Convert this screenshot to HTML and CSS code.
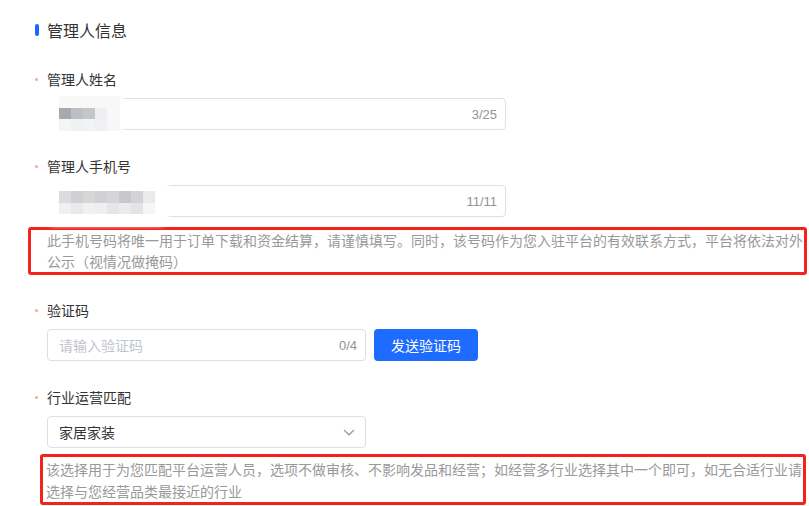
FILE: index.html
```html
<!DOCTYPE html>
<html lang="zh-CN">
<head>
<meta charset="utf-8">
<title>管理人信息</title>
<link rel="stylesheet" href="styles.css">
</head>
<body>
<div class="page">
  <div class="section-title"><span class="bar"></span>管理人信息</div>

  <div class="item item-name">
    <div class="label"><span class="dot"></span>管理人姓名</div>
    <div class="field field-wide">
      <span class="value"></span>
      <span class="count">3/25</span>
      <div class="mosaic mosaic-name">
        <div class="mrow m-name-1"></div>
        <div class="mrow m-name-2"></div>
        <div class="mrow m-name-3"></div>
      </div>
    </div>
  </div>

  <div class="item item-phone">
    <div class="label"><span class="dot"></span>管理人手机号</div>
    <div class="field field-wide">
      <span class="value"></span>
      <span class="count">11/11</span>
      <div class="mosaic mosaic-phone">
        <div class="mrow m-phone-1"></div>
        <div class="mrow m-phone-2"></div>
      </div>
    </div>
    <div class="hint hint-phone">此手机号码将唯一用于订单下载和资金结算，请谨慎填写。同时，该号码作为您入驻平台的有效联系方式，平台将依法对外<br>公示（视情况做掩码）</div>
  </div>

  <div class="item item-code">
    <div class="label"><span class="dot"></span>验证码</div>
    <div class="code-row">
      <div class="field field-narrow">
        <span class="placeholder">请输入验证码</span>
        <span class="count">0/4</span>
      </div>
      <button class="btn-send" type="button">发送验证码</button>
    </div>
  </div>

  <div class="item item-industry">
    <div class="label"><span class="dot"></span>行业运营匹配</div>
    <div class="field field-narrow select">
      <span class="selected">家居家装</span>
      <svg class="arrow" width="12" height="7" viewBox="0 0 12 7" aria-hidden="true"><path d="M1 1 L6 5.8 L11 1" fill="none" stroke="#999" stroke-width="1.2"/></svg>
    </div>
    <div class="hint hint-industry">该选择用于为您匹配平台运营人员，选项不做审核、不影响发品和经营；如经营多行业选择其中一个即可，如无合适行业请<br>选择与您经营品类最接近的行业</div>
  </div>
</div>
</body>
</html>
```

FILE: styles.css
```css
* { box-sizing: border-box; }

html, body {
  margin: 0;
  padding: 0;
  background: #fff;
}

body {
  font-family: "Noto Sans CJK SC", "Noto Sans", "Liberation Sans", sans-serif;
  font-size: 14px;
  color: #333;
  width: 809px;
  height: 506px;
  overflow: hidden;
}

.page {
  padding: 18px 0 0 47px;
}

.section-title {
  display: flex;
  align-items: center;
  margin-left: -12px;
  height: 24px;
  line-height: 24px;
  font-size: 16px;
  color: #333;
}

.bar {
  width: 4px;
  height: 12px;
  border-radius: 2px;
  background: #1a66ff;
  margin-right: 8px;
}

.item-name { margin-top: 26px; }
.item-phone { margin-top: 25px; }
.item-code { margin-top: 24px; }
.item-industry { margin-top: 25px; }

.label {
  display: flex;
  align-items: center;
  margin-left: -12px;
  height: 22px;
  line-height: 22px;
  font-size: 14px;
  color: #333;
}

.dot {
  width: 3px;
  height: 3px;
  border-radius: 50%;
  background: #f7a3a3;
  margin-right: 9px;
}

.field {
  position: relative;
  display: flex;
  align-items: center;
  justify-content: space-between;
  height: 32px;
  margin-top: 8px;
  padding: 0 8px 0 11px;
  border: 1px solid #dcdfe6;
  border-radius: 4px;
  background: #fff;
}

.field-wide { width: 459px; }
.field-narrow { width: 319px; }

.count {
  font-family: "Liberation Sans", "Noto Sans", sans-serif;
  font-size: 13px;
  color: #909399;
}

.placeholder {
  color: #c0c4cc;
  font-size: 14px;
}

.selected {
  color: #333;
  font-size: 14px;
}

.select { padding-right: 10px; }

.arrow { display: block; }

.code-row {
  display: flex;
  align-items: flex-start;
  gap: 8px;
}

.btn-send {
  margin-top: 8px;
  width: 104px;
  height: 32px;
  border: none;
  border-radius: 4px;
  background: #1e6bff;
  color: #fff;
  font-family: "Noto Sans CJK SC", "Noto Sans", sans-serif;
  font-size: 14px;
  padding: 0;
}

/* red annotation boxes */
.hint {
  border: 3px solid #f5211b;
  border-radius: 3px;
  color: #999;
  font-size: 14px;
  white-space: nowrap;
}

.hint-phone {
  margin-top: 10px;
  margin-left: -19px;
  width: 779px;
  padding: 0 0 0 16px;
  line-height: 21px;
}

.hint-industry {
  margin-top: 6px;
  margin-left: -7px;
  width: 766px;
  padding: 1px 0 0 3px;
  line-height: 22px;
}

/* pixelated privacy masks over the filled values */
.mosaic {
  position: absolute;
  background: #fff;
  box-shadow: 0 0 4px 3px #fff;
  border-radius: 8px;
}

.mosaic-name {
  left: -1px;
  top: -6px;
  width: 74px;
  height: 41px;
  padding: 3px 0 0 12px;
}

.mosaic-phone {
  left: -1px;
  top: -8px;
  width: 119px;
  height: 45px;
  padding: 13px 0 0 12px;
}

.mrow {
  height: 12px;
}

.m-name-1 {
  width: 61px;
  background: #f8f8f8;
}
.m-name-2 {
  width: 61px;
  height: 11px;
  background: linear-gradient(90deg,
    #a9a8aa 0 12px, #bcc0c6 12px 24px, #c5c6c8 24px 36px,
    #eeeff2 36px 48px, #f8f8f8 48px 61px);
}
.m-name-3 {
  width: 61px;
  background: linear-gradient(90deg,
    #f4f5f5 0 12px, #f0f1f2 12px 24px, #f2f3f3 24px 36px,
    #f0f0f1 36px 48px, #f6f7f8 48px 61px);
}

.m-phone-1 {
  width: 96px;
  background: linear-gradient(90deg,
    #dcdcdc 0 12px, #cfd0d4 12px 24px, #d6d6d6 24px 36px,
    #d0d1d5 36px 48px, #d6d6d8 48px 60px, #c8c8cc 60px 72px,
    #d2d3d6 72px 84px, #e9eaec 84px 96px);
}
.m-phone-2 {
  width: 96px;
  height: 11px;
  background: linear-gradient(90deg,
    #eef0f1 0 12px, #e8e9ec 12px 24px, #f0f1f2 24px 36px,
    #eeeff1 36px 48px, #e6e6e8 48px 60px, #ebebed 60px 72px,
    #e4e4e6 72px 84px, #f5f6f8 84px 96px);
}
```
